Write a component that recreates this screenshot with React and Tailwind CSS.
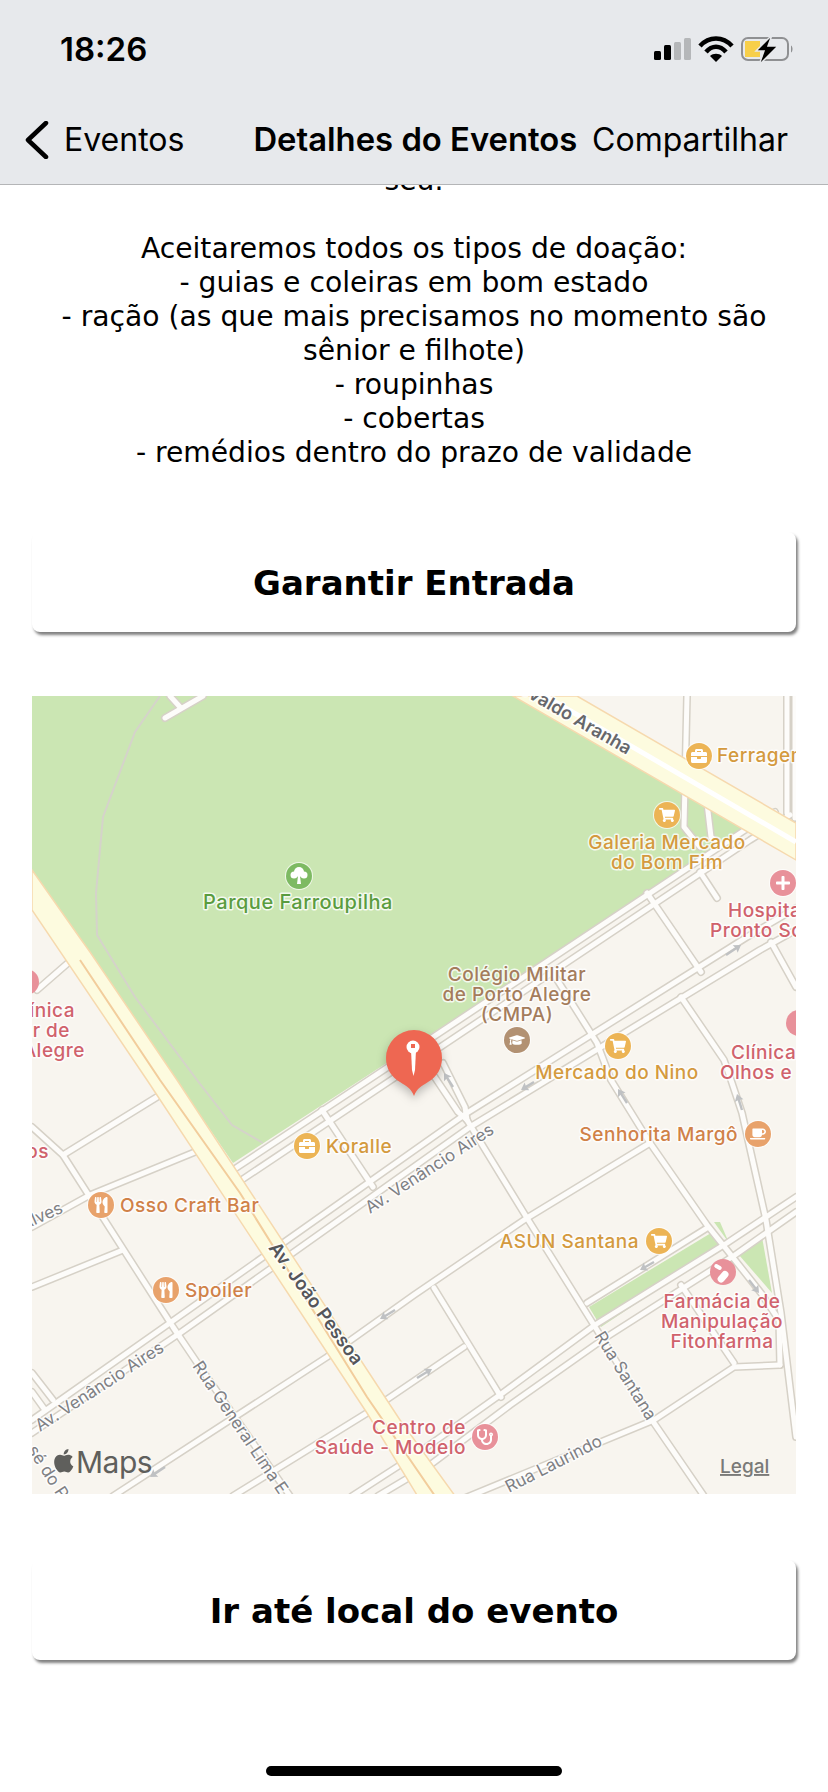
import { FaShoppingCart, FaBriefcase, FaUtensils, FaCoffee, FaPlus, FaGraduationCap, FaStethoscope } from 'react-icons/fa';

const roads = [
  // park edge + parallel
  'M236 1168L745 830L775 812',
  'M243 1179L750 840L790 815',
  // Venancio Aires
  'M32 1420L167 1325L467 1113L747 937L796 908',
  'M32 1433L180 1333L470 1127L760 950L796 930',
  // lower avenue
  'M796 1197L727 1243L595 1325L504 1392L414 1456L352 1496',
  'M796 1212L735 1255L605 1338L510 1405L430 1465L378 1496',
  'M113 1496L327 1357L414 1295L527 1218L650 1143',
  'M233 1496L367 1413L464 1347',
  'M460 1500L654 1420L734 1367L780 1365',
  // cross streets
  'M32 1127L63 1155L173 1327L200 1367L290 1496',
  'M63 1155L157 1097',
  'M37 990L68 963',
  'M32 1227L90 1195L195 1152',
  'M32 1287L123 1250',
  'M32 1373L53 1400',
  'M32 1392L45 1410',
  'M322 1110L373 1187',
  'M647 893L701 972',
  'M700 872L717 898',
  'M551 970L597 1043L611 1080L650 1143L707 1225L727 1250L761 1293L779 1320L780 1365',
  'M443 1063L465 1107L467 1120',
  'M430 1070L458 1112L467 1120',
  'M467 1120L527 1218L597 1330L654 1423L704 1496',
  'M434 1288L501 1397',
  'M681 997L724 1060L731 1080L742 1113L766 1220L781 1313L796 1437',
  'M771 942L796 987',
  'M587 1303L707 1228',
  'M681 1285L734 1363',
  'M687 696L684 827L700 847',
  'M707 803L711 837L718 843',
  'M787 696L787 813',
  'M795 696L795 818',
  'M165 718L203 696',
  'M170 696L180 707',
];

const arrows = [
  [726, 955, 741, 945], [395, 1310, 380, 1319], [165, 1467, 150, 1477], [534, 1082, 521, 1090],
  [627, 1103, 618, 1089], [742, 1110, 737, 1094], [654, 1262, 640, 1270], [749, 1280, 759, 1293],
  [417, 1378, 432, 1369], [453, 1087, 444, 1073],
];

const streetLabels = [
  { t: 'Alves', x: 64, y: 1212, r: -24, a: 'end' },
  { t: 'Av. Venâncio Aires', x: 40, y: 1432, r: -33 },
  { t: 'Av. Venâncio Aires', x: 370, y: 1214, r: -33 },
  { t: 'Rua General Lima E', x: 192, y: 1366, r: 56 },
  { t: 'Rua Santana', x: 594, y: 1336, r: 58 },
  { t: 'Rua Laurindo', x: 509, y: 1493, r: -27 },
  { t: 'sé do P', x: 27, y: 1450, r: 57 },
];

const labels = [
  { c: '#5a9c3f', a: 'middle', x: 298, s: 20, lines: [['Parque Farroupilha', 909]] },
  { c: '#d49a3e', x: 717, lines: [['Ferragem', 762]] },
  { c: '#d49a3e', a: 'middle', x: 667, lines: [['Galeria Mercado', 849], ['do Bom Fim', 869]] },
  { c: '#d0626c', x: 728, lines: [['Hospital', 917]] },
  { c: '#d0626c', x: 710, lines: [['Pronto Socorro', 937]] },
  { c: '#a47c5c', a: 'middle', x: 517, lines: [['Colégio Militar', 981], ['de Porto Alegre', 1001], ['(CMPA)', 1021]] },
  { c: '#d49a3e', a: 'middle', x: 617, lines: [['Mercado do Nino', 1079]] },
  { c: '#d0626c', x: 731, lines: [['Clínica de', 1059]] },
  { c: '#d0626c', x: 720, lines: [['Olhos e', 1079]] },
  { c: '#d0626c', a: 'end', x: 75, lines: [['Clínica', 1017]] },
  { c: '#d0626c', a: 'end', x: 70, lines: [['Militar de', 1037]] },
  { c: '#d0626c', a: 'end', x: 85, lines: [['Porto Alegre', 1057]] },
  { c: '#d49a3e', x: 326, lines: [['Koralle', 1153]] },
  { c: '#d08148', x: 120, lines: [['Osso Craft Bar', 1212]] },
  { c: '#d08148', x: 185, lines: [['Spoiler', 1297]] },
  { c: '#d08148', a: 'end', x: 738, lines: [['Senhorita Margô', 1141]] },
  { c: '#d49a3e', a: 'end', x: 639, lines: [['ASUN Santana', 1248]] },
  { c: '#d0626c', a: 'middle', x: 722, lines: [['Farmácia de', 1308], ['Manipulação', 1328], ['Fitonfarma', 1348]] },
  { c: '#d0626c', a: 'end', x: 466, lines: [['Centro de', 1434], ['Saúde - Modelo', 1454]] },
  { c: '#d0626c', a: 'end', x: 49, lines: [['dos', 1158]] },
];

const yellow = '#ecb455';
const orange = '#e8a26b';
const pink = '#e8919a';

const pois = [
  { x: 699, y: 756, c: yellow, I: FaBriefcase },
  { x: 667, y: 815, c: yellow, I: FaShoppingCart },
  { x: 783, y: 883, c: pink, I: FaPlus },
  { x: 517, y: 1040, c: '#b29172', I: FaGraduationCap },
  { x: 618, y: 1046, c: yellow, I: FaShoppingCart },
  { x: 307, y: 1146, c: yellow, I: FaBriefcase },
  { x: 101, y: 1205, c: orange, I: FaUtensils },
  { x: 166, y: 1290, c: orange, I: FaUtensils },
  { x: 758, y: 1134, c: orange, I: FaCoffee },
  { x: 659, y: 1241, c: yellow, I: FaShoppingCart },
  { x: 485, y: 1437, c: pink, I: FaStethoscope },
];

function Poi({ x, y, c, I }) {
  return (
    <g>
      <circle cx={x} cy={y} r="14" fill="#fff" opacity="0.7" />
      <circle cx={x} cy={y} r="13" fill={c} />
      <I x={x - 8} y={y - 8} size={16} color="#fff" />
    </g>
  );
}

function RoadArrow({ from }) {
  const [x1, y1, x2, y2] = from;
  const deg = (Math.atan2(y2 - y1, x2 - x1) * 180) / Math.PI;
  const len = Math.hypot(x2 - x1, y2 - y1);
  return (
    <g transform={`translate(${x1} ${y1}) rotate(${deg})`} fill="#bfc1c3">
      <rect x="0" y="-1.2" width={len - 5} height="2.4" />
      <path d={`M${len} 0L${len - 7} -4.5L${len - 6} 0L${len - 7} 4.5Z`} />
    </g>
  );
}

function MapView() {
  return (
    <svg viewBox="32 696 764 798" className="block w-full h-[798px]" style={{ fontFamily: 'Inter, "Noto Sans", sans-serif' }}>
      <rect x="32" y="696" width="764" height="798" fill="#f8f5ef" />
      {/* parque */}
      <polygon points="32,696 513,696 745,830 233,1163 32,870" fill="#cbe6b3" />
      <polygon points="589,1307 711,1233 721,1247 601,1327" fill="#cbe6b3" />
      <polygon points="739,1255 762,1237 772,1293" fill="#cbe6b3" />
      <polygon points="714,1222 720,1222 729,1243" fill="#cbe6b3" />
      <polyline points="160,696 135,732 103,817 96,893 97,935 135,997 197,1080 232,1125 263,1143" fill="none" stroke="#d5d3ca" strokeWidth="2" />

      {/* ruas */}
      <g fill="none" stroke="#d6d1c7" strokeWidth="8" strokeLinecap="round" strokeLinejoin="round">
        {roads.map((d, i) => <path key={i} d={d} />)}
      </g>
      <g fill="none" stroke="#fdfcfa" strokeWidth="5" strokeLinecap="round" strokeLinejoin="round">
        {roads.map((d, i) => <path key={i} d={d} />)}
      </g>

      {/* avenidas */}
      <polygon points="513,696 577,696 796,823 796,860" fill="#fdfbdf" stroke="#f6d9ae" strokeWidth="1.5" />
      <path d="M545 696L796 842" stroke="#fff" strokeWidth="5" fill="none" />
      <polygon points="32,870 80,938 90,952 177,1080 400,1420 458,1500 420,1500 367,1413 147,1080 32,910" fill="#fdfbdf" stroke="#f6d9ae" strokeWidth="1.5" />
      <path d="M80 960L160 1080L240 1193L367 1397L435 1496" stroke="#f2cd9c" strokeWidth="2" fill="none" />

      {arrows.map((a, i) => <RoadArrow key={i} from={a} />)}

      <g stroke="#fff" strokeOpacity="0.8" strokeWidth="3" strokeLinejoin="round" className="[paint-order:stroke]">
        {streetLabels.map((s, i) => (
          <text key={i} x={s.x} y={s.y} fontSize="17" fill="#7e8084" textAnchor={s.a || 'start'} transform={`rotate(${s.r} ${s.x} ${s.y})`}>{s.t}</text>
        ))}
        <text x="268" y="1248" fontSize="18.500" fontWeight="600" fill="#55565a" transform="rotate(54 268 1248)">Av. João Pessoa</text>
        <text x="627" y="755" fontSize="18" fontWeight="600" fill="#66676b" textAnchor="end" transform="rotate(30 627 755)">Osvaldo Aranha</text>
        {labels.map((l, i) => l.lines.map(([t, y]) => (
          <text key={i + t} x={l.x} y={y} fontSize={l.s || 19} fontWeight="500" letterSpacing="0.5" fill={l.c} textAnchor={l.a || 'start'}>{t}</text>
        )))}
      </g>

      {pois.map((p, i) => <Poi key={i} {...p} />)}

      {/* icones desenhados */}
      <circle cx="299" cy="876" r="14" fill="#fff" opacity="0.7" />
      <circle cx="299" cy="876" r="13" fill="#7dba63" />
      <path d="M298 876h2l1 8h-4z" fill="#fff" />
      <circle cx="299" cy="872" r="5" fill="#fff" />
      <circle cx="294" cy="875" r="3.5" fill="#fff" />
      <circle cx="304" cy="875" r="3.5" fill="#fff" />

      <circle cx="799" cy="1023" r="13" fill={pink} />
      <circle cx="26" cy="982" r="13" fill={pink} />

      <circle cx="723" cy="1272" r="13" fill={pink} />
      <rect x="720" y="1270" width="7" height="13" rx="3.5" fill="#fff" transform="rotate(40 723 1276)" />
      <rect x="714" y="1265" width="8" height="4" rx="2" fill="#fff" transform="rotate(30 718 1267)" />

      {/* marcador */}
      <path d="M414 1096C411 1088 406 1086 400 1082C391 1077 386 1068 386 1058A28 28 0 0 1 442 1058C442 1068 437 1077 428 1082C422 1086 417 1088 414 1096Z" fill="#ee6752" style={{ filter: 'drop-shadow(0 4px 5px rgba(0,0,0,0.25))' }} />
      <path d="M411 1050h5l-1 20l-1.500 6l-1.500 -6z" fill="#fff" />
      <circle cx="413" cy="1047" r="6.500" fill="#fff" />
      <rect x="411" y="1044" width="4" height="4" fill="#ee6752" />

      {/* marca */}
      <g transform="translate(52 1449) scale(0.98)" fill="#5f5f5c">
        <path d="M12.152 6.896c-.948 0-2.415-1.078-3.96-1.04-2.04.027-3.91 1.183-4.961 3.014-2.117 3.675-.546 9.103 1.519 12.09 1.013 1.454 2.208 3.09 3.792 3.039 1.52-.065 2.09-.987 3.935-.987 1.831 0 2.35.987 3.96.948 1.637-.026 2.676-1.48 3.676-2.948 1.156-1.688 1.636-3.325 1.662-3.415-.039-.013-3.182-1.221-3.22-4.857-.026-3.04 2.48-4.494 2.597-4.559-1.429-2.09-3.623-2.324-4.39-2.376-2-.156-3.675 1.09-4.61 1.09zM15.53 3.83c.843-1.012 1.4-2.427 1.245-3.83-1.207.052-2.662.805-3.532 1.818-.78.896-1.454 2.338-1.273 3.714 1.338.104 2.715-.688 3.559-1.701" />
      </g>
      <text x="76" y="1473" fontSize="30" fill="#5f5f5c" letterSpacing="-0.5">Maps</text>
      <text x="720" y="1473" fontSize="19" fontWeight="500" fill="#7a7a78" textDecoration="underline">Legal</text>
    </svg>
  );
}

function StatusIcons() {
  return (
    <svg width="148" height="28" viewBox="0 0 148 28" className="overflow-visible">
      <rect x="4" y="15" width="7" height="9" rx="1.500" fill="#000" />
      <rect x="14" y="9" width="7" height="15" rx="1.500" fill="#000" />
      <rect x="24" y="6" width="7" height="18" rx="1.500" fill="#b5b7b9" />
      <rect x="34" y="2" width="7" height="22" rx="1.500" fill="#b5b7b9" />
      <path d="M50 10C59 0 73 0 82 10" fill="none" stroke="#000" strokeWidth="4.500" />
      <path d="M56 16C62 9 70 9 76 16" fill="none" stroke="#000" strokeWidth="4.500" />
      <path d="M60 20C63 17 69 17 72 20L66 26Z" fill="#000" />
      <rect x="92" y="2" width="46" height="22" rx="6" fill="none" stroke="#8f9092" strokeWidth="2" />
      <path d="M95 5H110V21H95Z" fill="#f7cf4a" />
      <path d="M141 9.500C143 10.500 143 15.500 141 16.500Z" fill="#8f9092" />
      <path d="M122 -1L106 15H114L109 29L128 10H118Z" fill="#000" stroke="#e7e9ec" strokeWidth="1.500" />
    </svg>
  );
}

function ActionButton({ children }) {
  return (
    <button className="mx-8 h-[100px] rounded-lg bg-white pt-[3px] text-[34px] font-bold text-black shadow-[2px_3px_3px_rgba(0,0,0,0.5)] font-['DejaVu_Sans',sans-serif]">
      {children}
    </button>
  );
}

const doacoes = [
  'seu.',
  '\u00a0',
  'Aceitaremos todos os tipos de doação:',
  '- guias e coleiras em bom estado',
  '- ração (as que mais precisamos no momento são',
  'sênior e filhote)',
  '- roupinhas',
  '- cobertas',
  '- remédios dentro do prazo de validade',
];

export default function App() {
  return (
    <div className="flex h-[1792px] flex-col overflow-hidden bg-white font-['Inter',sans-serif]">
      <header className="relative z-10 h-[185px] shrink-0 border-b border-[#b4b5b7] bg-[#e7e9ec]">
        <div className="flex h-[100px] items-center justify-between pl-[60px] pr-[30px]">
          <span className="text-[33px] font-semibold text-black">18:26</span>
          <StatusIcons />
        </div>
        <div className="flex h-[80px] items-center pl-[25px] pr-[40px]">
          <svg width="24" height="38" viewBox="0 0 24 38" fill="none" stroke="#000" strokeWidth="4.500" strokeLinecap="round" strokeLinejoin="round">
            <path d="M21 2L3 19L21 36" />
          </svg>
          <span className="ml-[15px] text-[32px] text-black">Eventos</span>
          <span className="ml-[69px] text-[32.8px] font-semibold text-black">Detalhes do Eventos</span>
          <span className="ml-auto text-[32px] text-black">Compartilhar</span>
        </div>
      </header>

      <div className="flex flex-1 flex-col overflow-hidden">
        <div className="-mt-[21px] text-center text-[28.2px] leading-[34px] text-black font-['DejaVu_Sans',sans-serif]">
          {doacoes.map((l, i) => <p key={i}>{l}</p>)}
        </div>
        <div className="mt-[62px] flex flex-col">
          <ActionButton>Garantir Entrada</ActionButton>
        </div>
        <div className="mx-8 mt-16">
          <MapView />
        </div>
        <div className="mt-[66px] flex flex-col">
          <ActionButton>Ir até local do evento</ActionButton>
        </div>
        <div className="mt-[106px] flex justify-center">
          <div className="h-[10px] w-[296px] rounded-full bg-black" />
        </div>
      </div>
    </div>
  );
}
